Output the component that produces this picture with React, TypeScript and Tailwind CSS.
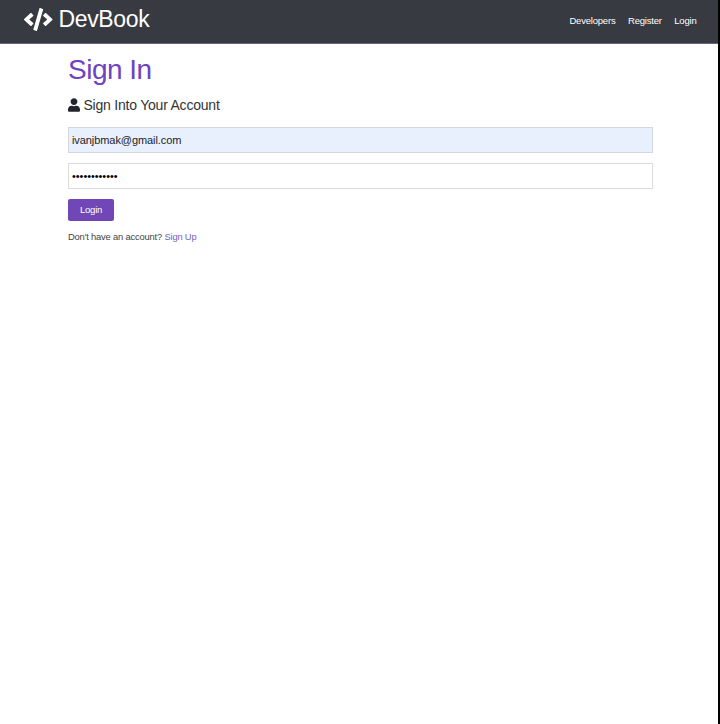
import { FaCode, FaUser } from "react-icons/fa";

const links = ["Developers", "Register", "Login"];

export default function App() {
  return (
    <div className="flex h-[724px] w-[720px] flex-col overflow-hidden border-r-2 border-black bg-white font-['Liberation_Sans',Arial,sans-serif] text-[#333]">
      <nav className="flex h-[44px] shrink-0 items-start justify-between border-b border-[#6a6184] bg-[#373a41] pr-[21.5px] pl-[24px] text-white">
        <h1 className="flex items-center pt-[5px] text-[23px] leading-[28px] tracking-[-0.35px]">
          <FaCode className="mr-[6px] h-[23px] w-[28.5px]" />
          DevBook
        </h1>
        <ul className="flex gap-[12.5px] pt-[14px] text-[9.5px] leading-[14px] tracking-[-0.2px]">
          {links.map((link) => (
            <li key={link}>{link}</li>
          ))}
        </ul>
      </nav>
      <main className="flex flex-col items-start pr-[65px] pl-[68px]">
        <h2 className="mt-[9px] text-[28px] leading-[34px] tracking-[-0.5px] text-[#6f42c1]">Sign In</h2>
        <p className="mt-[8px] flex items-center text-[14px] leading-[20px] tracking-[-0.22px]">
          <FaUser className="mr-[3.5px] h-[14px] w-[12px] text-[#22252b]" />
          Sign Into Your Account
        </p>
        <form className="mt-[12px] flex w-full flex-col items-start">
          <input
            type="email"
            defaultValue="ivanjbmak@gmail.com"
            className="h-[26px] w-full border border-[#d3d7e3] bg-[#e8f0fe] px-[3px] text-[11px] tracking-[-0.08px] text-[#20232b]"
          />
          <input
            type="password"
            defaultValue="abcdefghijkl"
            className="mt-[10px] h-[26px] w-full border border-[#dcdcdc] px-[3px] text-[10.85px] text-black"
          />
          <button type="button" className="mt-[10px] h-[22px] w-[46px] rounded-[2px] bg-[#7147b8] pt-px text-[9.5px] tracking-[-0.2px] text-white">
            Login
          </button>
        </form>
        <p className="mt-[9px] text-[9.4px] leading-[14px] tracking-[-0.19px] text-[#444]">
          Don't have an account? <a className="text-[#7562b8]">Sign Up</a>
        </p>
      </main>
    </div>
  );
}
